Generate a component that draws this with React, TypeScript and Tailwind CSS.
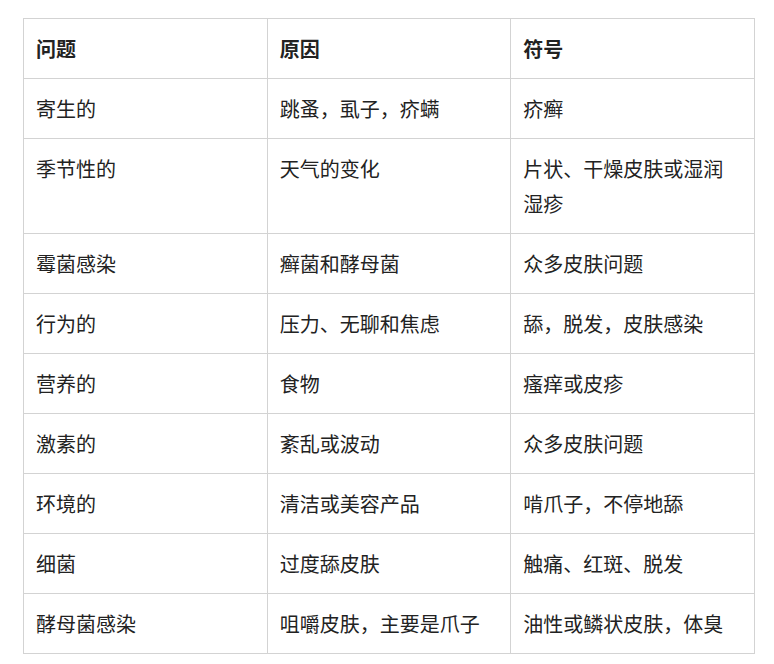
import React from "react";

const rows: [string, string, string][] = [
  ["寄生的", "跳蚤，虱子，疥螨", "疥癣"],
  ["季节性的", "天气的变化", "片状、干燥皮肤或湿润湿疹"],
  ["霉菌感染", "癣菌和酵母菌", "众多皮肤问题"],
  ["行为的", "压力、无聊和焦虑", "舔，脱发，皮肤感染"],
  ["营养的", "食物", "瘙痒或皮疹"],
  ["激素的", "紊乱或波动", "众多皮肤问题"],
  ["环境的", "清洁或美容产品", "啃爪子，不停地舔"],
  ["细菌", "过度舔皮肤", "触痛、红斑、脱发"],
  ["酵母菌感染", "咀嚼皮肤，主要是爪子", "油性或鳞状皮肤，体臭"],
];

export default function App() {
  return (
    <div
      className="bg-white w-[774px] h-[664px] pt-[18px] pl-[23px]"
      style={{ fontFamily: '"Noto Sans CJK SC", "Noto Sans", sans-serif' }}
    >
      <table className="table-fixed border-collapse w-[732px] text-[20px] leading-[35px] text-[#222]">
        <thead>
          <tr>
            {["问题", "原因", "符号"].map((h) => (
              <th
                key={h}
                className="border border-[#d3d3d3] px-3 py-3 text-left font-bold align-top"
              >
                {h}
              </th>
            ))}
          </tr>
        </thead>
        <tbody>
          {rows.map((r, i) => (
            <tr key={i}>
              {r.map((c, j) => (
                <td
                  key={j}
                  className="border border-[#d3d3d3] px-3 py-3 align-top font-normal"
                >
                  {c}
                </td>
              ))}
            </tr>
          ))}
        </tbody>
      </table>
    </div>
  );
}
